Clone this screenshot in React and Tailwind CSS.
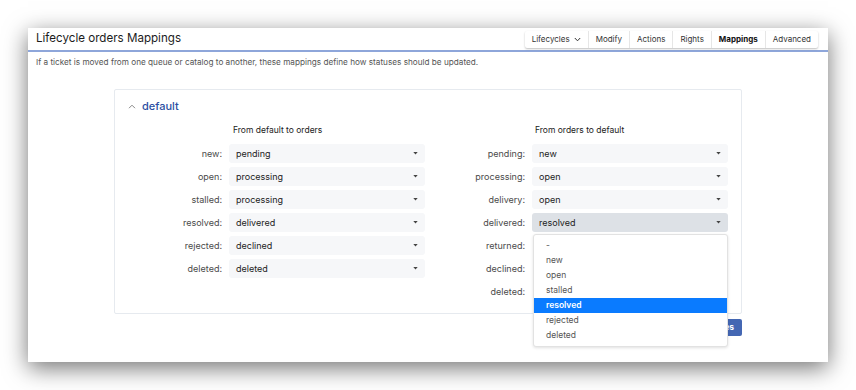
import React from "react";

const Caret = () => (
  <svg width="5" height="3" viewBox="0 0 5 3" className="shrink-0">
    <path d="M0.3 0 L4.7 0 L2.5 2.6 Z" fill="#444" />
  </svg>
);

function Select({ value, active }) {
  return (
    <div
      className={
        "w-[196px] h-[19px] rounded-[3px] flex items-center justify-between pl-[7px] pr-[7px] text-[9px] text-[#222] " +
        (active ? "bg-[#dde1e6]" : "bg-[#f6f7f9]")
      }
    >
      <span>{value}</span>
      <Caret />
    </div>
  );
}

function Row({ label, value, labelW, active, children }) {
  return (
    <div className="flex items-center h-[19px] relative">
      <div className="text-right pr-[7px] text-[9px] text-[#4a4a4a]" style={{ width: labelW }}>
        {label}:
      </div>
      {value !== undefined ? <Select value={value} active={active} /> : null}
      {children}
    </div>
  );
}

const leftRows = [
  ["new", "pending"],
  ["open", "processing"],
  ["stalled", "processing"],
  ["resolved", "delivered"],
  ["rejected", "declined"],
  ["deleted", "deleted"],
];

const rightRows = [
  ["pending", "new"],
  ["processing", "open"],
  ["delivery", "open"],
  ["delivered", "resolved"],
  ["returned"],
  ["declined"],
  ["deleted"],
];

const options = ["-", "new", "open", "stalled", "resolved", "rejected", "deleted"];

export default function App() {
  return (
    <div
      className="w-[856px] h-[390px] bg-white overflow-hidden pt-[28px] pl-[28px]"
      style={{ fontFamily: "Inter, 'Noto Sans', sans-serif" }}
    >
      <div className="w-[800px] h-[334px] bg-white shadow-[0_6px_22px_rgba(0,0,0,0.55)] flex flex-col">
        {/* header */}
        <div className="h-[24px] border-b-2 border-[#8ea6da] flex items-center justify-between pl-[8px] pr-[10px]">
          <div className="text-[11.6px] text-[#1c1c1c] leading-none">Lifecycle orders Mappings</div>
          <div className="flex h-[17px] bg-white shadow-[0_1px_2px_rgba(0,0,0,0.25)] rounded-[2px] text-[8px] text-[#333]">
            <div className="flex items-center gap-[4px] px-[7px] border-r border-[#e6e6e6]">
              Lifecycles
              <svg width="7" height="5" viewBox="0 0 7 5">
                <path d="M0.8 1 L3.5 3.8 L6.2 1" fill="none" stroke="#333" strokeWidth="1" />
              </svg>
            </div>
            <div className="flex items-center px-[7px] border-r border-[#e6e6e6]">Modify</div>
            <div className="flex items-center px-[7px] border-r border-[#e6e6e6]">Actions</div>
            <div className="flex items-center px-[7px] border-r border-[#e6e6e6]">Rights</div>
            <div className="flex items-center px-[7px] border-r border-[#e6e6e6] font-bold text-[#111]">Mappings</div>
            <div className="flex items-center px-[7px]">Advanced</div>
          </div>
        </div>
        {/* description */}
        <div className="pl-[8px] pt-[5px] text-[8.2px] text-[#555] leading-[11px]">
          If a ticket is moved from one queue or catalog to another, these mappings define how statuses should be updated.
        </div>
        {/* card */}
        <div className="ml-[86px] mt-[21px] w-[628px] h-[225px] border border-[#e6eaef] rounded-[2px] flex flex-col">
          <div className="flex items-center h-[30px] pl-[13px] pt-[2px] gap-[6px]">
            <svg width="8" height="5" viewBox="0 0 8 5">
              <path d="M1 4.2 L4 1.2 L7 4.2" fill="none" stroke="#888" strokeWidth="1" />
            </svg>
            <span className="text-[11px] font-medium text-[#2b4fa2]">default</span>
          </div>
          <div className="flex pt-[4px]">
            <div className="flex flex-col">
              <div className="pl-[118px] text-[8.5px] text-[#222] h-[13px] mb-[1px] leading-[13px]">From default to orders</div>
              <div className="flex flex-col gap-[4px] mt-[6px]">
                {leftRows.map(([l, v]) => (
                  <Row key={l} label={l} value={v} labelW={114} />
                ))}
              </div>
            </div>
            <div className="flex flex-col">
              <div className="pl-[110px] text-[8.5px] text-[#222] h-[13px] mb-[1px] leading-[13px]">From orders to default</div>
              <div className="flex flex-col gap-[4px] mt-[6px]">
                {rightRows.map(([l, v]) => (
                  <Row key={l} label={l} value={v} labelW={107} active={l === "delivered"}>
                    {l === "delivered" ? (
                      <div className="absolute left-[108px] top-[21px] w-[195px] bg-white border border-[#e2e2e2] rounded-[3px] shadow-[0_1px_3px_rgba(0,0,0,0.12)] py-[3px] z-10">
                        {options.map((o) => (
                          <div
                            key={o}
                            className={
                              "h-[15px] leading-[15px] pl-[12px] text-[8.5px] " +
                              (o === "resolved" ? "bg-[#0a7bff] text-white font-semibold" : "text-[#555]")
                            }
                          >
                            {o}
                          </div>
                        ))}
                      </div>
                    ) : null}
                  </Row>
                ))}
              </div>
            </div>
          </div>
        </div>
        <div className="ml-[86px] w-[628px] flex justify-end mt-[5px]">
          <div className="h-[17px] px-[8px] flex items-center bg-[#4467b3] rounded-[2px] text-white text-[8.5px] font-bold">
            Save Changes
          </div>
        </div>
      </div>
    </div>
  );
}
